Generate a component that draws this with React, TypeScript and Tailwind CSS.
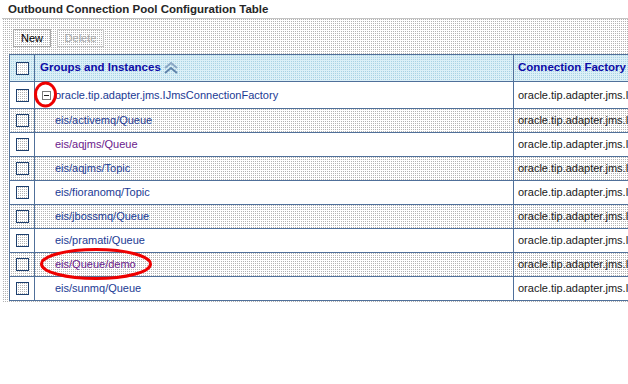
import React from 'react';

const dots = 'bg-[image:repeating-conic-gradient(#b3b3b3_0%_25%,#ffffff_0%_100%)] bg-[length:2px_2px]';
const blueDots = 'bg-[image:repeating-conic-gradient(#a9d2e4_0%_25%,#dcf0f7_0%_100%)] bg-[length:2px_2px]';

const rows = [
  { name: 'eis/activemq/Queue', visited: false },
  { name: 'eis/aqjms/Queue', visited: true },
  { name: 'eis/aqjms/Topic', visited: false },
  { name: 'eis/fioranomq/Topic', visited: false },
  { name: 'eis/jbossmq/Queue', visited: false },
  { name: 'eis/pramati/Queue', visited: false },
  { name: 'eis/Queue/demo', visited: true },
  { name: 'eis/sunmq/Queue', visited: false },
];

function Checkbox() {
  return <div className={`w-[13px] h-[13px] border border-[#1d3f6e] ${dots}`} />;
}

function SortIcon() {
  return (
    <svg width="14" height="12" viewBox="0 0 14 12" className="ml-[3px]">
      <path d="M1 6 L7 1 L13 6" fill="none" stroke="#8aa6c4" strokeWidth="2" />
      <path d="M1 11 L7 6 L13 11" fill="none" stroke="#5f83aa" strokeWidth="2" />
    </svg>
  );
}

function ExpandIcon() {
  return (
    <div className="w-[9px] h-[9px] border border-[#7a7a7a] bg-white flex items-center justify-center">
      <div className="w-[5px] h-px bg-[#222]" />
    </div>
  );
}

export default function App() {
  return (
    <div className="relative w-[628px] h-[384px] overflow-hidden bg-white font-['Liberation_Sans',Arial,sans-serif]">
      <h1 className="h-[18px] pl-[8px] pt-[1px] text-[11.5px] leading-[16px] font-bold text-[#262626]">
        Outbound Connection Pool Configuration Table
      </h1>

      <div className={`ml-[2px] border-t border-[#c4c4c4] pl-[7px] pt-[10px] pb-[1px] ${dots}`}>
        {/* Toolbar */}
        <div className="flex gap-[6px] ml-[4px] h-[18px]">
          <button className={`w-[38px] h-[18px] border border-[#a9a9a9] text-[11px] text-black ${dots}`}>
            New
          </button>
          <button className={`w-[47px] h-[18px] border border-[#c6c6c6] text-[11px] text-[#a8a8a8] ${dots}`}>
            Delete
          </button>
        </div>

        {/* Table */}
        <div className="mt-[7px] w-[720px] border-l border-t border-[#50709a]">
          <div className={`flex h-[27px] border-b border-[#50709a] ${blueDots}`}>
            <div className="w-[25px] shrink-0 border-r border-[#50709a] flex items-center pl-[6px]">
              <div className="w-[13px] h-[13px] border border-[#1d3f6e] bg-[image:repeating-conic-gradient(#c4c4c4_0%_25%,#ffffff_0%_100%)] bg-[length:2px_2px]" />
            </div>
            <div className="w-[479px] shrink-0 border-r border-[#50709a] flex items-center pl-[5px] text-[11.5px] font-bold text-[#0c0ca6]">
              Groups and Instances
              <SortIcon />
            </div>
            <div className="flex-1 flex items-center pl-[4px] text-[11.5px] font-bold text-[#0c0ca6]">
              Connection Factory
            </div>
          </div>

          <div className="flex h-[27px] border-b border-[#50709a] bg-white">
            <div className="w-[25px] shrink-0 border-r border-[#50709a] flex items-center pl-[6px]">
              <Checkbox />
            </div>
            <div className="w-[479px] shrink-0 border-r border-[#50709a] flex items-center gap-[4px] pl-[7px] text-[11px] text-[#1b3a94]">
              <ExpandIcon />
              oracle.tip.adapter.jms.IJmsConnectionFactory
            </div>
            <div className="flex-1 flex items-center pl-[4px] text-[11px] text-[#1a1a1a]">
              oracle.tip.adapter.jms.IJmsConnectionFactory
            </div>
          </div>

          {rows.map((row, i) => (
            <div
              key={row.name}
              className={`flex h-[24px] border-b border-[#50709a] ${i % 2 === 0 ? dots : 'bg-white'}`}
            >
              <div className="w-[25px] shrink-0 border-r border-[#50709a] flex items-center pl-[6px]">
                <Checkbox />
              </div>
              <div
                className={`w-[479px] shrink-0 border-r border-[#50709a] flex items-center pl-[20px] text-[11px] ${
                  row.visited ? 'text-[#6b1a8c]' : 'text-[#1b3a94]'
                }`}
              >
                {row.name}
              </div>
              <div className="flex-1 flex items-center pl-[4px] text-[11px] text-[#1a1a1a]">
                oracle.tip.adapter.jms.IJmsConnectionFactory
              </div>
            </div>
          ))}
        </div>
      </div>

      {/* red annotations */}
      <svg className="absolute left-0 top-0 pointer-events-none" width="628" height="384">
        <ellipse cx="45.5" cy="94.5" rx="10" ry="11.5" fill="none" stroke="#ee0000" strokeWidth="3" />
        <ellipse cx="96" cy="264" rx="54.5" ry="14.5" fill="none" stroke="#ee0000" strokeWidth="3" />
      </svg>
    </div>
  );
}
